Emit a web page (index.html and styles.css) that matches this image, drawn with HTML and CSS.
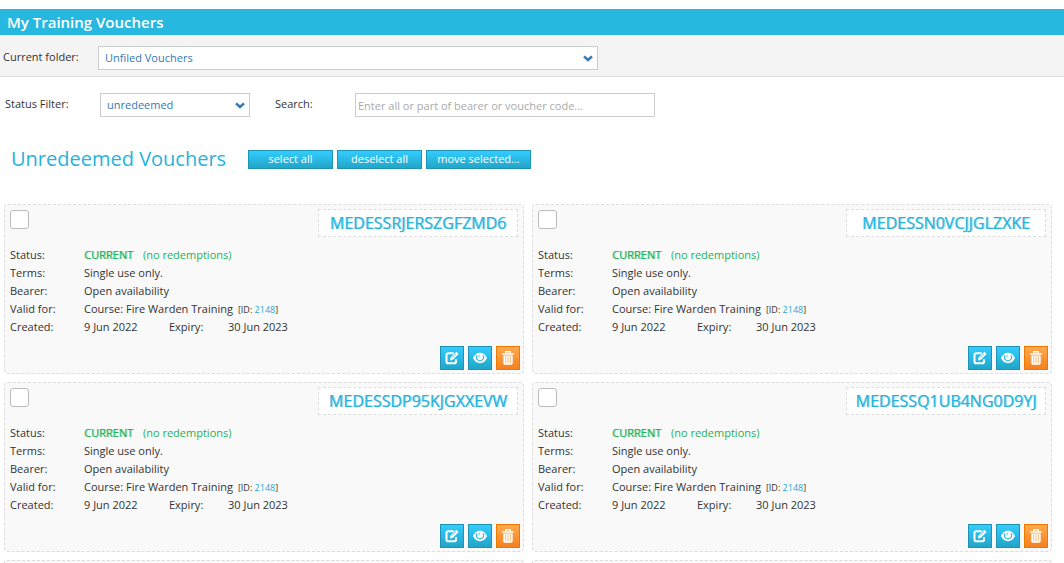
FILE: index.html
```html
<!DOCTYPE html>
<html lang="en">
<head>
<meta charset="utf-8">
<title>My Training Vouchers</title>
<link rel="stylesheet" href="styles.css">
<script src="vouchers.js" defer></script>
</head>
<body>
<svg class="sprite" aria-hidden="true">
  <symbol id="chevron" viewBox="0 0 10 7"><path d="M1 1.3 L5 5 L9 1.3" fill="none" stroke="currentColor" stroke-width="2.5"/></symbol>
  <symbol id="edit" viewBox="0 0 14 14"><path d="M8.6 2.2H3.4Q1.5 2.2 1.5 4.1V10.4Q1.5 12.3 3.4 12.3H9.1Q11 12.3 11 10.4V8.2" fill="none" stroke="currentColor" stroke-width="2"/><path d="M11.3 0.8 L13.6 3.1 L7.7 9 L4.9 9.6 L5.4 6.7 Z" fill="currentColor"/><path d="M7 6.8 L10.8 3" stroke="#25b6dc" stroke-width="0.6"/></symbol>
  <symbol id="eye" viewBox="0 0 14 12"><path d="M0 6 C3 -0.9 11 -0.9 14 6 C11 12.9 3 12.9 0 6Z" fill="currentColor"/><path d="M4 3.2 A3.6 3.6 0 1 0 10 3.2" fill="none" stroke="#25b6dc" stroke-width="1.1"/><path d="M5.6 4.9 Q5.8 3.5 7.3 3.4" fill="none" stroke="#25b6dc" stroke-width="0.8"/></symbol>
  <symbol id="trash" viewBox="0 0 14 15"><path d="M4.5 2.5V0.8H9.5V2.5M0.8 3.2H13.2" fill="none" stroke="currentColor" stroke-width="1.4"/><path d="M2 4.8H12V13.2Q12 14.6 10.6 14.6H3.4Q2 14.6 2 13.2Z" fill="currentColor"/><path d="M4.5 5.8V13M7 5.8V13M9.5 5.8V13" stroke="#f9a152" stroke-width="0.8"/></symbol>
</svg>
<header class="title-bar"><h1>My Training Vouchers</h1></header>
<div class="folder-bar">
  <label class="folder-label" for="folder">Current folder:</label>
  <span class="select select-folder"><select id="folder"><option>Unfiled Vouchers</option></select><svg class="chevron"><use href="#chevron"/></svg></span>
</div>
<div class="filter-bar">
  <label class="status-label" for="status">Status Filter:</label>
  <span class="select select-status"><select id="status"><option>unredeemed</option></select><svg class="chevron"><use href="#chevron"/></svg></span>
  <label class="search-label" for="search">Search:</label>
  <input class="search" id="search" type="text" placeholder="Enter all or part of bearer or voucher code...">
</div>
<main>
  <div class="section-head">
    <h2>Unredeemed Vouchers</h2>
    <button class="btn" type="button">select all</button>
    <button class="btn" type="button">deselect all</button>
    <button class="btn btn-wide" type="button">move selected...</button>
  </div>
  <div class="cards" id="cards"></div>
</main>
</body>
</html>
```
FILE: styles.css
```css
* { box-sizing: border-box; }
body {
  margin: 0;
  padding-top: 9px;
  background: #fff;
  color: #333;
  font: 11px/18px "Open Sans", sans-serif;
}
h1, h2, dl, dd { margin: 0; }
select, input, button { font: inherit; }
a { color: #27aad8; text-decoration: none; }
.sprite { display: none; }

.title-bar { background: #27b8df; padding: 0 7px; }
.title-bar h1 {
  color: #fff;
  font-size: 15px;
  font-weight: 600;
  line-height: 26px;
}

.folder-bar {
  display: flex;
  align-items: center;
  padding: 11px 3px 6px;
  background: #f4f4f4;
  border-bottom: 1px solid #ddd;
}
.folder-label { width: 95px; }
.filter-bar {
  display: flex;
  align-items: center;
  padding: 16px 5px 0;
}
.status-label { width: 95px; }
.search-label { width: 80px; margin-left: 25px; }
label { padding-bottom: 2px; }

.select { position: relative; display: flex; }
.select-folder { width: 500px; }
.select-status { width: 150px; }
.select select {
  appearance: none;
  width: 100%;
  height: 24px;
  padding: 0 24px 0 6px;
  border: 1px solid #ccc;
  border-radius: 0;
  background: #fff;
  color: #337ab7;
}
.chevron {
  position: absolute;
  right: 5px;
  top: 9px;
  width: 10px;
  height: 7px;
  color: #337ab7;
  pointer-events: none;
}
.search {
  width: 300px;
  height: 24px;
  padding: 0 2px;
  border: 1px solid #ccc;
  color: #333;
}
.search::placeholder { color: #aaa; }

.section-head {
  display: flex;
  align-items: center;
  gap: 4px;
  padding: 27px 11px 0;
}
.section-head h2 {
  width: 233px;
  color: #27b3dc;
  font-size: 20px;
  font-weight: 400;
  line-height: 30px;
}
.btn {
  width: 85px;
  height: 19px;
  padding: 0;
  border: 1px solid #1f93b3;
  background: linear-gradient(#33ccff, #22a5c8);
  color: #fff;
  line-height: 16px;
}
.btn-wide { width: 105px; }

.cards {
  display: grid;
  grid-template-columns: 1fr 1fr;
  gap: 8px;
  padding: 30px 12px 0 4px;
}
.card {
  padding: 4px 5px 3px;
  border: 1px dashed #ddd;
  border-radius: 4px;
  background: #f9f9f9;
}
.card-edge {
  padding: 2px 0 0;
  border-bottom: 0;
  border-radius: 4px 4px 0 0;
}
.card-top {
  display: flex;
  justify-content: space-between;
  align-items: flex-start;
}
.tick {
  appearance: none;
  width: 19px;
  height: 19px;
  margin: 1px 0 0;
  border: 1px solid #bbb;
  border-radius: 3px;
  background: #fff;
}
.tick:checked { background: #27b8df; }
.code {
  width: 200px;
  border: 1px dashed #ddd;
  background: #fff;
  color: #27b3dc;
  font-size: 16px;
  line-height: 26px;
  text-align: center;
  text-shadow: 1px 0 rgba(39, 179, 220, 0.6);
}
.details {
  display: grid;
  grid-template-columns: 74px 1fr;
  margin-top: 9px;
}
.details dd { display: flex; align-items: baseline; }
.state { color: #1eb254; }
.state b {
  margin-right: 10px;
  font-weight: 400;
  text-shadow: 1px 0 rgba(30, 178, 84, 0.6);
}
.ident { font-size: 9px; line-height: 12px; margin-left: 5px; }
.created { width: 85px; }
.expiry { width: 59px; }
.actions {
  display: flex;
  justify-content: flex-end;
  gap: 4px;
  margin: 10px -2px 0 0;
}
.icon-btn {
  display: flex;
  align-items: center;
  justify-content: center;
  width: 24px;
  height: 24px;
  padding: 0;
  border: 1px solid #1f93b3;
  background: linear-gradient(#33ccff, #22a5c8);
  color: #fff;
}
.icon-btn svg { width: 14px; height: 14px; }
.icon-delete {
  border-color: #f07800;
  background: linear-gradient(#ffaa4d, #f28120);
}
```
FILE: vouchers.js
```js
const codes = ["MEDESSRJERSZGFZMD6", "MEDESSN0VCJJGLZXKE", "MEDESSDP95KJGXXEVW", "MEDESSQ1UB4NG0D9YJ"];

const card = (code) => `
  <article class="card">
    <div class="card-top">
      <input class="tick" type="checkbox" aria-label="${code}">
      <div class="code">${code}</div>
    </div>
    <dl class="details">
      <dt>Status:</dt><dd class="state"><b>CURRENT</b>(no redemptions)</dd>
      <dt>Terms:</dt><dd>Single use only.</dd>
      <dt>Bearer:</dt><dd>Open availability</dd>
      <dt>Valid for:</dt><dd>Course: Fire Warden Training <span class="ident">[ID: <a href="#">2148</a>]</span></dd>
      <dt>Created:</dt><dd><span class="created">9 Jun 2022</span><span class="expiry">Expiry:</span><span>30 Jun 2023</span></dd>
    </dl>
    <div class="actions">
      <button class="icon-btn" type="button" aria-label="Edit"><svg><use href="#edit"/></svg></button>
      <button class="icon-btn" type="button" aria-label="View"><svg><use href="#eye"/></svg></button>
      <button class="icon-btn icon-delete" type="button" aria-label="Delete"><svg><use href="#trash"/></svg></button>
    </div>
  </article>`;

document.getElementById("cards").innerHTML =
  codes.map(card).join("") + '<article class="card card-edge"></article>'.repeat(2);
```
